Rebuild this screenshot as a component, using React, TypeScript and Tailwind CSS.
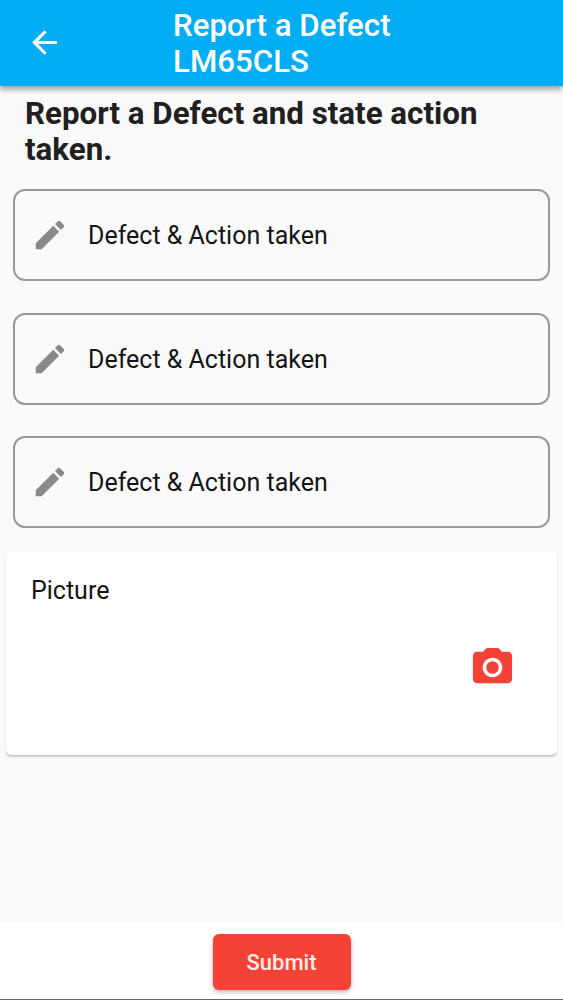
import { MdArrowBack, MdCameraAlt, MdEdit } from "react-icons/md";

function DefectField() {
  return (
    <label className="flex h-[92px] items-center rounded-[12px] border-2 border-[#999] pl-[16px]">
      <MdEdit className="size-[38px] shrink-0 text-[#898989]" />
      <span className="mt-px ml-[19px] text-[25px] leading-none text-[#141414]">Defect &amp; Action taken</span>
    </label>
  );
}

export default function App() {
  return (
    <div className="flex h-[1000px] w-[563px] flex-col overflow-hidden bg-[#fafafa] font-['Roboto',sans-serif]">
      <header className="z-10 flex h-[86px] shrink-0 items-center bg-[#03adf3] pl-[25.5px] text-white shadow-[0_3px_6px_rgba(0,0,0,0.4)]">
        <MdArrowBack className="mb-[2px] size-[37px]" />
        <h1 className="mt-[2px] ml-[110.5px] w-[260px] text-[31.25px] leading-[36px] font-medium">Report a Defect LM65CLS</h1>
      </header>
      <main className="flex flex-1 flex-col">
        <h2 className="mt-[10px] ml-[25px] w-[500px] text-[31.3px] leading-[36px] font-bold text-[#202020]">
          Report a Defect and state action taken.
        </h2>
        <div className="mx-[13px] mt-[21px] flex flex-col gap-[31.5px]">
          <DefectField />
          <DefectField />
          <DefectField />
        </div>
        <section className="mx-[6px] mt-[24px] flex h-[203px] flex-col rounded-[5px] bg-white px-[25px] pt-[24px] shadow-[0_2px_2px_rgba(0,0,0,0.16),0_1px_1px_rgba(0,0,0,0.1)]">
          <h3 className="text-[25px] leading-[30px] text-[#141414]">Picture</h3>
          <MdCameraAlt className="mt-[38px] mr-[16px] size-[47px] self-end text-[#f44336]" />
        </section>
      </main>
      <footer className="flex h-[77px] shrink-0 justify-center border-b border-[#666] bg-white pt-[11px]">
        <button className="h-[56px] w-[138px] rounded-[6px] bg-[#f44336] text-[22px] font-medium text-[#ffecea] shadow-[0_2px_4px_rgba(0,0,0,0.3)]">
          Submit
        </button>
      </footer>
    </div>
  );
}
